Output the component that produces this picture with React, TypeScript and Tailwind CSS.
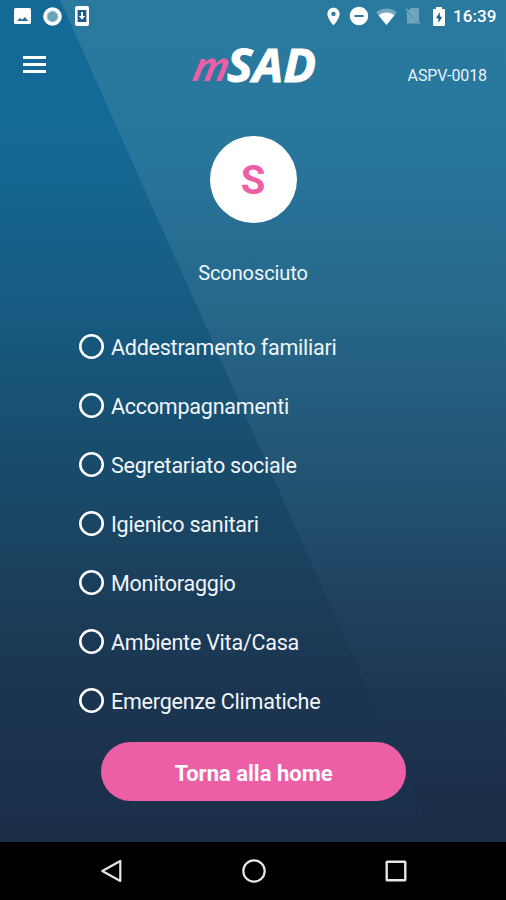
import { MdDoNotDisturbOn, MdLocationOn } from 'react-icons/md'

const services = [
  'Addestramento familiari',
  'Accompagnamenti',
  'Segretariato sociale',
  'Igienico sanitari',
  'Monitoraggio',
  'Ambiente Vita/Casa',
  'Emergenze Climatiche',
]

function StatusBar() {
  return (
    <div className="flex h-8 items-center justify-between pr-[9px] pl-[14px]">
      <div className="flex items-center">
        {/* Picture */}
        <svg className="h-[16px] w-[17px]" viewBox="0 0 17 16">
          <rect width="17" height="16" rx="1.500" fill="#fff" />
          <path d="M3 13 6 10l2 1.700 3-2.700 3.200 4z" fill="#2a6f96" />
        </svg>
        {/* Recording dot */}
        <svg className="ml-[12px] h-[19px] w-[19px]" viewBox="0 0 19 19">
          <circle cx="9.5" cy="9.5" r="9.3" fill="#fff" />
          <circle cx="9.5" cy="9.5" r="5.4" fill="#6ba4b5" stroke="#a5cad6" strokeWidth="1" />
        </svg>
        {/* System update */}
        <svg className="ml-[13px] h-5 w-[14px]" viewBox="0 0 14 20">
          <rect width="14" height="20" rx="2" fill="#fff" />
          <rect x="2.600" y="4" width="8.800" height="12" fill="#1d5b88" />
          <path d="M6 6h2v4h2.200L7 13.800 3.800 10H6z" fill="#fff" />
        </svg>
      </div>

      <div className="flex items-center">
        <MdLocationOn className="h-[21px] w-[21px] text-white" />
        <MdDoNotDisturbOn className="ml-[4px] h-[22px] w-[22px] text-white" />
        {/* Wifi */}
        <svg className="ml-[6px] h-[17px] w-[21px]" viewBox="0 0 21 17">
          <path d="M0 4.200C6-.9 15-.9 21 4.200L10.500 17z" fill="#fff" fillOpacity=".35" />
          <path d="M2.600 7.200c4.600-3.700 11.200-3.700 15.800 0L10.500 17z" fill="#fff" />
        </svg>
        {/* No sim */}
        <svg className="ml-[8px] h-[18px] w-[16px]" viewBox="0 0 16 18">
          <path d="M3.500 3.500 6 1h8v13.500zM1.800 4.500 14 16.500H2z" fill="#fff" fillOpacity=".32" />
          <path d="M.8 1.500 15.200 16.500" stroke="#fff" strokeOpacity=".35" strokeWidth="1.300" />
        </svg>
        {/* Battery */}
        <svg className="ml-[12px] h-[19px] w-[12px]" viewBox="0 0 12 19">
          <path d="M3 0h6v2h2q1 0 1 1v15q0 1-1 1H1q-1 0-1-1V3q0-1 1-1h2z" fill="#fff" />
          <path d="M6.800 5 3 11.300h2.400V16L9.200 9.700H6.800z" fill="#1d5b88" />
        </svg>
        <span className="ml-[8px] w-[44px] text-[17px] leading-8 font-medium tracking-[0.1px] text-white">16:39</span>
      </div>
    </div>
  )
}

function Logo() {
  return (
    <svg className="h-[70px] w-[150px]" viewBox="0 0 150 70" role="img" aria-label="mSAD">
      <text
        transform="translate(13 49) skewX(-16)"
        fill="#ec5fa6"
        fontFamily="Lato, sans-serif"
        fontStyle="italic"
        fontWeight="700"
        fontSize="43"
        textLength="34"
        lengthAdjust="spacingAndGlyphs"
      >
        m
      </text>
      <text
        x="49"
        y="49.500"
        fill="#fff"
        stroke="#fff"
        strokeWidth="0.900"
        fontFamily="'Open Sans', sans-serif"
        fontStyle="italic"
        fontWeight="700"
        fontSize="47"
        textLength="89"
        lengthAdjust="spacingAndGlyphs"
      >
        SAD
      </text>
    </svg>
  )
}

function Header() {
  return (
    <header className="grid h-[78px] grid-cols-[1fr_150px_1fr] items-start">
      <button className="mt-[24px] ml-[23px] flex w-[23px] flex-col gap-[4px]" aria-label="Menu">
        <span className="h-[3px] w-full bg-white" />
        <span className="h-[3px] w-full bg-white" />
        <span className="h-[3px] w-full bg-white" />
      </button>
      <Logo />
      <span className="mt-[32px] mr-[19px] text-right text-[16px] leading-6 tracking-[-0.1px] text-[#e8f4fb]">ASPV-0018</span>
    </header>
  )
}

function NavBar() {
  return (
    <nav className="flex h-[58px] items-center justify-between bg-black pr-[99px] pl-[99px]">
      <svg className="h-6 w-[24px]" viewBox="0 0 24 24" fill="none" stroke="#e6e6e6" strokeWidth="2.200">
        <path d="M21.300 2v20L3.300 12z" strokeLinejoin="round" />
      </svg>
      <svg className="h-[24px] w-[24px]" viewBox="0 0 24 24" fill="none" stroke="#e6e6e6" strokeWidth="2.200">
        <circle cx="12" cy="12" r="10.700" />
      </svg>
      <svg className="h-[22px] w-[22px]" viewBox="0 0 22 22" fill="none" stroke="#e6e6e6" strokeWidth="2.400">
        <rect x="1.700" y="1.700" width="18.600" height="18.600" rx="0.500" />
      </svg>
    </nav>
  )
}

export default function App() {
  return (
    <div className="flex h-[900px] w-[506px] flex-col overflow-hidden bg-black font-['Roboto',sans-serif]">
      <div className="relative h-[842px] bg-[linear-gradient(180deg,#146a96_0px,#146a96_130px,#165b82_300px,#194866_500px,#1b3753_660px,#1b2e48_842px)]">
        {/* Lighter diagonal half of the background */}
        <div className="absolute inset-0 bg-[linear-gradient(180deg,#2a7a9f_0px,#28769c_150px,#266689_320px,#22506f_500px,#1e3a57_660px,#1b2e48_800px)] [clip-path:polygon(60px_0,100%_0,100%_100%,436px_100%)]" />

        <div className="relative flex flex-col">
          <StatusBar />
          <Header />

          <div className="mt-[26px] flex h-[87px] w-[87px] items-center justify-center self-center rounded-full bg-white">
            <span className="mt-[3px] text-[40px] leading-none font-bold text-[#ec5fa6]">S</span>
          </div>
          <p className="mt-[38px] text-center text-[20px] leading-6 tracking-[-0.1px] text-[#eef6fb]">Sconosciuto</p>

          <div className="mt-[32px] flex flex-col pl-[79px]">
            {services.map((name) => (
              <label key={name} className="flex h-[59px] items-center">
                <svg className="h-[25px] w-[25px]" viewBox="0 0 25 25" fill="none" stroke="#fff" strokeWidth="2.600">
                  <circle cx="12.500" cy="12.500" r="11.200" />
                </svg>
                <span className="mt-[2px] ml-[7px] text-[21.500px] leading-8 tracking-[-0.230px] text-[#f1f5f9]">{name}</span>
              </label>
            ))}
          </div>

          <button className="mt-[12px] ml-px h-[59px] w-[305px] self-center rounded-full bg-[#ec5fa6] pt-[3px] text-[22px] font-bold text-white">
            Torna alla home
          </button>
        </div>
      </div>
      <NavBar />
    </div>
  )
}
